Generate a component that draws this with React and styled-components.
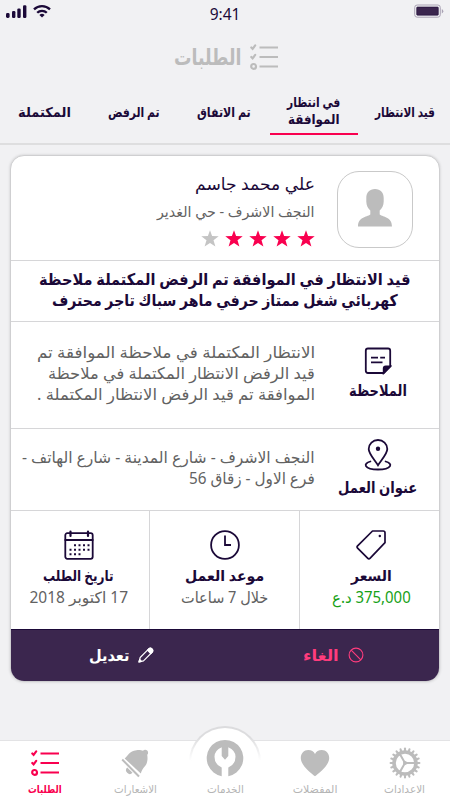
import React, { useLayoutEffect, useRef } from 'react';
import styled, { createGlobalStyle } from 'styled-components';

const ink = '#1b0938';
const plum = '#3b264e';
const pink = '#f9004f';
const mute = '#bcbcbc';
const body = '#626262';
const rule = '#d6d6d8';

const Global = createGlobalStyle`
  * { box-sizing: border-box; }
  body { margin: 0; background: #f1f1f3; }
`;

const Screen = styled.div`
  width: 450px;
  height: 800px;
  overflow: hidden;
  display: flex;
  flex-direction: column;
  background: #f1f1f3;
  color: ${ink};
  font-family: "Noto Sans", "DejaVu Sans", sans-serif;
`;

const LineBox = styled.div`
  width: ${p => p.$w}px;
  height: ${p => p.$lh}px;
  line-height: ${p => p.$lh}px;
  font-size: ${p => p.$size}px;
  font-weight: ${p => (p.$bold ? 700 : 400)};
  color: ${p => p.$color || 'inherit'};
  white-space: nowrap;
  flex: none;
`;

const LineText = styled.span`
  display: inline-block;
  transform-origin: 100% 50%;
`;

/* One line of text, condensed or widened to span its column. */
function Line({ w, lh = 20, size = 14, bold, color, children }) {
  const ref = useRef(null);
  useLayoutEffect(() => {
    const el = ref.current;
    el.style.transform = `scaleX(${w / el.offsetWidth})`;
  }, [w, children]);
  return (
    <LineBox $w={w} $lh={lh} $size={size} $bold={bold} $color={color}>
      <LineText ref={ref}>{children}</LineText>
    </LineBox>
  );
}

const StatusBar = styled.div`
  height: 30px;
  flex: none;
  display: grid;
  grid-template-columns: 1fr auto 1fr;
  padding: 4px 6px 0;
`;
const Signals = styled.div`
  display: flex;
  gap: 6px;
`;
const Clock = styled.div`
  font-size: 15.5px;
  line-height: 20px;
  width: 30px;
  display: flex;
  justify-content: center;
`;
const BatterySlot = styled.div`
  display: flex;
  justify-content: flex-end;
`;

const TitleBar = styled.header`
  height: 54px;
  flex: none;
  display: flex;
  justify-content: center;
  gap: 8px;
  padding: 14px 0 0 2px;
`;

const Tabs = styled.nav`
  height: 61px;
  flex: none;
  display: grid;
  grid-template-columns: 91px 90px 90px 90px 89px;
  border-bottom: 2px solid #dededf;
`;
const Tab = styled.div`
  display: flex;
  flex-direction: column;
  align-items: center;
  justify-content: center;
  height: 51px;
  margin: 0 1px;
  padding-top: ${p => (p.$active ? 5 : 8)}px;
  border-bottom: 2px solid ${p => (p.$active ? pink : 'transparent')};
`;

const Card = styled.main`
  width: 430px;
  height: 527px;
  flex: none;
  margin: 10px 10px 0;
  border: 1px solid #cfcfd1;
  border-radius: 14px;
  background: #fff;
  overflow: hidden;
  box-shadow: 0 0 3px rgba(0, 0, 0, 0.16);
`;
const Profile = styled.section`
  height: 105px;
  display: flex;
  gap: 22px;
  padding: 15px 26px 0 0;
  border-bottom: 1px solid ${rule};
`;
const Avatar = styled.div`
  width: 76px;
  height: 77px;
  border: 1px solid #c9c9c9;
  border-radius: 22px;
  display: flex;
  align-items: center;
  justify-content: center;
  padding-bottom: 3px;
`;
const Stack = styled.div`
  display: flex;
  flex-direction: column;
`;
const Stars = styled.div`
  display: flex;
  gap: 6px;
  margin-top: 4px;
`;
const Summary = styled.section`
  height: 61px;
  padding-top: 8px;
  display: flex;
  flex-direction: column;
  align-items: center;
  border-bottom: 1px solid ${rule};
`;
const Detail = styled.section`
  height: ${p => p.$h}px;
  display: grid;
  grid-template-columns: 124px 1fr;
  border-bottom: 1px solid ${rule};
`;
const Caption = styled.div`
  display: flex;
  flex-direction: column;
  align-items: center;
  padding: ${p => p.$top}px 0 0 2px;
`;
const Paragraph = styled.div`
  padding-top: ${p => p.$top}px;
`;
const Facts = styled.section`
  height: 118px;
  display: grid;
  grid-template-columns: 140px 150px 1fr;
`;
const Fact = styled.div`
  display: flex;
  flex-direction: column;
  align-items: center;
  padding-top: 19px;
  padding-left: ${p => p.$padLeft || 0}px;
  padding-right: ${p => p.$padRight || 0}px;
  border-left: ${p => (p.$last ? 0 : 1)}px solid ${rule};
`;
const Actions = styled.footer`
  height: 53px;
  display: grid;
  grid-template-columns: 1fr 1fr;
  background: ${plum};
  border-top: 1px solid ${ink};
`;
const Action = styled.button`
  display: flex;
  align-items: center;
  justify-content: center;
  gap: 8px;
  border: 0;
  padding: 0 0 2px ${p => p.$indent}px;
  background: none;
  font: inherit;
  color: ${p => p.$color};
`;

const BottomNav = styled.nav`
  height: 60px;
  flex: none;
  margin-top: auto;
  display: grid;
  grid-template-columns: repeat(5, 90px);
  grid-template-rows: 59px;
  background: #fff;
  border-top: 1px solid #e3e3e5;
`;
const NavItem = styled.div`
  min-height: 0;
  display: flex;
  flex-direction: column;
  align-items: center;
  justify-content: flex-end;
  gap: 1px;
  padding-bottom: 2px;
  color: ${p => (p.$active ? pink : '#b5b5b5')};
`;
const NavIcon = styled.div`
  height: 32px;
  display: flex;
  align-items: center;
  justify-content: center;
`;
const Hump = styled.div`
  width: 72px;
  height: 72px;
  margin-bottom: -19px;
  flex: none;
  border-radius: 50%;
  background: linear-gradient(#fff, #fff) padding-box,
    linear-gradient(#dcdcde 15%, #fff 48%) border-box;
  border: 2px solid transparent;
  display: flex;
  justify-content: center;
  padding-top: 11px;
`;

const Svg = ({ w, h, box, children, ...rest }) => (
  <svg width={w} height={h} viewBox={box || `0 0 ${w} ${h}`} fill="none" {...rest}>
    {children}
  </svg>
);

const ListIcon = ({ color, w = 28, h = 26 }) => (
  <Svg w={w} h={h} box="0 0 28 26" stroke={color} strokeWidth="2.2" strokeLinecap="round">
    <path d="M9.500 3.500H28M9.500 13H28M9.500 22.500H28" strokeLinecap="butt" />
    <path d="M1.300 3.500L2.600 4.800L5.200 1.400M1.300 13L2.600 14.300L5.200 10.900" />
    <circle cx="3.600" cy="22.400" r="2.400" />
  </Svg>
);

const SignalIcon = () => (
  <Svg w={21} h={15} fill={ink}>
    <rect x="0" y="9" width="3.6" height="5" rx="1.4" />
    <rect x="6" y="7" width="3.4" height="7" rx="1.2" />
    <rect x="11.3" y="4.5" width="3.4" height="9.5" rx="1.2" />
    <rect x="17" y="1.2" width="3.4" height="12.8" rx="1.2" />
  </Svg>
);
const WifiIcon = () => (
  <Svg w={18} h={14} stroke={ink} strokeWidth="2.3">
    <path d="M1 5.4A11.4 11.4 0 0 1 17 5.4" />
    <path d="M4.2 8.8A6.8 6.8 0 0 1 13.8 8.8" />
    <path d="M6.4 11L9 13.6L11.6 11A3.7 3.7 0 0 0 6.4 11Z" fill={ink} stroke="none" />
  </Svg>
);
const BatteryIcon = () => (
  <Svg w={30} h={14}>
    <rect x=".7" y="1" width="25.6" height="12.2" rx="2.5" stroke="#aaa3b4" />
    <rect x="2.7" y="3" width="21.6" height="8.2" rx=".8" fill={plum} stroke={ink} strokeWidth=".6" />
    <path d="M27.8 5V9.4Q29.3 8.4 29.3 7.2Q29.3 6 27.8 5Z" fill="#aaa3b4" />
  </Svg>
);
const PersonIcon = () => (
  <Svg w={36} h={38} fill={mute}>
    <path d="M18 0C23.500 0 26.700 3.600 26.700 9V12.500C26.700 16.500 25 19.500 22.700 21.600V25.500C26.500 28.300 35 28 35 37.500H1C1 28 9.500 28.300 13.300 25.500V21.600C11 19.500 9.300 16.500 9.300 12.500V9C9.300 3.600 12.500 0 18 0Z" />
  </Svg>
);
const Star = ({ color }) => (
  <Svg w={18} h={17} fill={color}>
    <path d="M9 .2L11.100 6.100L17.700 6.300L12.500 10.300L14.400 16.500L9 12.900L3.600 16.500L5.500 10.300L.3 6.300L6.900 6.100Z" />
  </Svg>
);
const NoteIcon = () => (
  <Svg w={28} h={28} stroke={ink} strokeWidth="1.8">
    <path d="M4 1.500H24Q26.200 1.500 26.200 3.700V19.500L19.700 26H4Q1.800 26 1.800 23.800V3.700Q1.800 1.500 4 1.500Z" />
    <path d="M19.700 26V21.500Q19.700 19.500 21.700 19.500H26.200Z" fill={ink} />
    <path d="M7 10.700H14M16.200 10.700H21M7 15.400H18.500" />
  </Svg>
);
const PinIcon = () => (
  <Svg w={28} h={32} stroke={ink} strokeWidth="1.8" strokeLinecap="round">
    <path d="M14 26.300C10.500 20.800 4.700 14.800 4.700 10A9.300 9 0 0 1 23.300 10C23.300 14.800 17.500 20.800 14 26.300Z" />
    <circle cx="14" cy="9.700" r="1.300" fill={ink} />
    <path d="M6.400 22.500C-1.500 24.500 .2 30.500 14 30.500S29.500 24.500 21.600 22.500" />
  </Svg>
);
const TagIcon = () => (
  <Svg w={30} h={30} stroke={ink} strokeWidth="1.7" strokeLinejoin="round">
    <path d="M16.500 1H27.200Q29 1 29 2.800V12.700L14.200 28.200Q12.900 29.500 11.600 28.200L1.600 18.200Q.5 17 1.600 15.900Z" />
    <circle cx="23.800" cy="6" r="1.200" fill={ink} stroke="none" />
  </Svg>
);
const ClockIcon = () => (
  <Svg w={30} h={30} stroke={ink} strokeWidth="1.8">
    <circle cx="15" cy="15" r="13.900" />
    <path d="M15 5.500V15H21" />
  </Svg>
);
const CalendarIcon = () => (
  <Svg w={30} h={30} stroke={ink} strokeWidth="1.800" strokeLinecap="round">
    <rect x="1.300" y="3.200" width="27.400" height="25.600" rx="2" />
    <path d="M1.300 10H28.700" />
    <path d="M6.500 1.500V6M24 1.500V6" strokeWidth="2.200" />
    <path d="M10 15.300H26M5.500 19.800H26M5.500 24.300H17.500" strokeWidth="2" strokeDasharray="2 2.500" strokeLinecap="butt" />
  </Svg>
);
const BanIcon = () => (
  <Svg w={16} h={16} stroke="#ff3c7d" strokeWidth="1.100">
    <circle cx="8" cy="8" r="6.900" />
    <path d="M3.200 3.200L12.800 12.800" />
  </Svg>
);
const PencilIcon = () => (
  <Svg w={16} h={16} stroke="#fff" strokeWidth="1.200" strokeLinejoin="round">
    <path d="M1 15L2.200 10.500L11 1.700Q12.400 .6 13.900 2Q15.400 3.600 14.300 5L5.500 13.800Z" />
    <path d="M9.500 3.200L12.800 6.500L14.300 5Q15.400 3.600 13.900 2Q12.400 .6 11 1.700ZM1 15L1.700 12.500L3.500 14.300Z" fill="#fff" />
  </Svg>
);
const teeth = Array.from({ length: 20 }, (_, i) => i * 18);
const GearIcon = () => (
  <Svg w={32} h={32} stroke={mute}>
    <circle cx="16" cy="16" r="11" strokeWidth="3.600" />
    {teeth.map(a => (
      <path key={a} d="M16 3.600V1.600" strokeWidth="2.100" strokeLinecap="round" transform={`rotate(${a} 16 16)`} />
    ))}
    <path d="M16 16H26M16 16L11 7.300M16 16L11 24.700" strokeWidth="2" />
    <circle cx="16" cy="16" r="2" fill={mute} stroke="none" />
  </Svg>
);
const HeartIcon = () => (
  <Svg w={30} h={28} fill={mute}>
    <path d="M15 27.300C11 24 .8 16.500 .8 9C.8 4.500 4 1 8.200 1C11.500 1 13.800 2.500 15 5C16.200 2.500 18.500 1 21.800 1C26 1 29.200 4.500 29.200 9C29.200 16.500 19 24 15 27.300Z" />
  </Svg>
);
const WrenchIcon = () => (
  <Svg w={38} h={38} fill={mute}>
    <path d="M15.700 37.200A18.300 18.300 0 1 1 22.300 37.200V28.500Q29.500 25.500 29.500 17.800Q29.500 11.500 22.300 8.300V17L19 20.800L15.700 17V8.300Q8.500 11.500 8.500 17.800Q8.500 25.500 15.700 28.500Z" />
  </Svg>
);
const BellIcon = () => (
  <Svg w={28} h={29} fill={mute}>
    <path d="M3.700 9.500C7.500 6.500 8 2 15.500 1.200C18.500 .9 20.500 1.200 22 1.800C23 .3 25.200 .4 26.200 1.500C27.500 3 27.300 4.800 26.200 5.800C27 10 26.300 14 24.500 16.500C22 19.500 20.500 21.500 19.800 24.500Z" />
    <path d="M1.200 10.500L18 27.500" stroke={mute} strokeWidth="2" />
    <path d="M6.200 18.500L11.500 23.800A3.500 3.500 0 1 1 6.200 18.500Z" />
  </Svg>
);

export default function App() {
  return (
    <Screen>
      <Global />
      <StatusBar>
        <Signals><SignalIcon /><WifiIcon /></Signals>
        <Clock>9:41</Clock>
        <BatterySlot><BatteryIcon /></BatterySlot>
      </StatusBar>
      <TitleBar dir="rtl">
        <ListIcon color={mute} />
        <Line w={68} lh={25} size={22} bold color={mute}>الطلبات</Line>
      </TitleBar>
      <Tabs dir="rtl">
        <Tab><Line w={60} lh={17} size={13.500} bold>قيد الانتظار</Line></Tab>
        <Tab $active>
          <Line w={53} lh={17} size={13.500} bold>في انتظار</Line>
          <Line w={52} lh={17} size={13.500} bold>الموافقة</Line>
        </Tab>
        <Tab><Line w={54} lh={17} size={13.500} bold>تم الاتفاق</Line></Tab>
        <Tab><Line w={52} lh={17} size={13.500} bold>تم الرفض</Line></Tab>
        <Tab><Line w={53} lh={17} size={13.500} bold>المكتملة</Line></Tab>
      </Tabs>
      <Card dir="rtl">
        <Profile>
          <Avatar><PersonIcon /></Avatar>
          <Stack>
            <Line w={120} lh={26} size={17}>علي محمد جاسم</Line>
            <Line w={158} lh={29} size={14.500} color={body}>النجف الاشرف - حي الغدير</Line>
            <Stars>
              {[1, 2, 3, 4, 5].map(n => <Star key={n} color={n < 5 ? pink : '#c4c4c4'} />)}
            </Stars>
          </Stack>
        </Profile>
        <Summary>
          <Line w={371} lh={21} size={16} bold>قيد الانتظار في الموافقة تم الرفض المكتملة ملاحظة</Line>
          <Line w={346} lh={21} size={16} bold>كهربائي شغل ممتاز حرفي ماهر سباك تاجر محترف</Line>
        </Summary>
        <Detail $h={107}>
          <Caption $top={25}>
            <NoteIcon />
            <Line w={58} lh={30} size={15.500} bold>الملاحظة</Line>
          </Caption>
          <Paragraph $top={20}>
            <Line w={278} lh={21} size={16} color={body}>الانتظار المكتملة في ملاحظة الموافقة تم</Line>
            <Line w={267} lh={21} size={16} color={body}>قيد الرفض الانتظار المكتملة في ملاحظة</Line>
            <Line w={278} lh={21} size={16} color={body}>الموافقة تم قيد الرفض الانتظار المكتملة .</Line>
          </Paragraph>
        </Detail>
        <Detail $h={82}>
          <Caption $top={10}>
            <PinIcon />
            <Line w={79} lh={32} size={15.500} bold>عنوان العمل</Line>
          </Caption>
          <Paragraph $top={18}>
            <Line w={293} lh={21} size={16} color={body}>النجف الاشرف - شارع المدينة - شارع الهاتف -</Line>
            <Line w={126} lh={21} size={16} color={body}>فرع الاول - زقاق 56</Line>
          </Paragraph>
        </Detail>
        <Facts>
          <Fact $padLeft={3}>
            <TagIcon />
            <Line w={41} lh={31} size={15} bold>السعر</Line>
            <Line w={79} lh={12} size={15.500} color="#17a117">375,000 د.ع</Line>
          </Fact>
          <Fact>
            <ClockIcon />
            <Line w={79} lh={31} size={15} bold>موعد العمل</Line>
            <Line w={87} lh={12} size={15.500} color={body}>خلال 7 ساعات</Line>
          </Fact>
          <Fact $last $padRight={3}>
            <CalendarIcon />
            <Line w={71} lh={31} size={15} bold>تاريخ الطلب</Line>
            <Line w={99} lh={12} size={15.500} color={body}>17 اكتوبر 2018</Line>
          </Fact>
        </Facts>
        <Actions>
          <Action $color="#ff3c7d" $indent={3}><BanIcon /><Line w={36} lh={26} size={16} bold>الغاء</Line></Action>
          <Action $color="#fff" $indent={7}><PencilIcon /><Line w={41} lh={26} size={16} bold>تعديل</Line></Action>
        </Actions>
      </Card>
      <BottomNav dir="rtl">
        <NavItem>
          <NavIcon><GearIcon /></NavIcon>
          <Line w={41} lh={18} size={11}>الاعدادات</Line>
        </NavItem>
        <NavItem>
          <NavIcon><HeartIcon /></NavIcon>
          <Line w={45} lh={18} size={11}>المفضلات</Line>
        </NavItem>
        <NavItem>
          <Hump><WrenchIcon /></Hump>
          <Line w={37} lh={18} size={11}>الخدمات</Line>
        </NavItem>
        <NavItem>
          <NavIcon><BellIcon /></NavIcon>
          <Line w={43} lh={18} size={11}>الاشعارات</Line>
        </NavItem>
        <NavItem $active>
          <NavIcon><ListIcon color={pink} /></NavIcon>
          <Line w={34} lh={18} size={11} bold>الطلبات</Line>
        </NavItem>
      </BottomNav>
    </Screen>
  );
}
